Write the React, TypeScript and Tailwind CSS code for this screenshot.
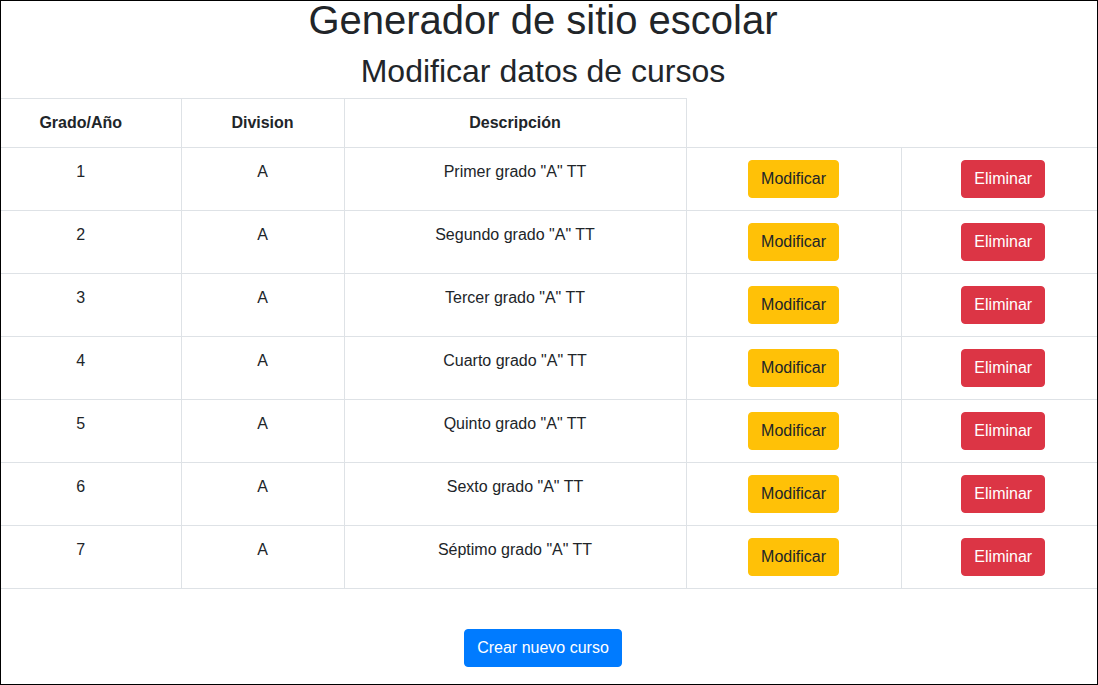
import React from 'react';

interface Curso {
    grado: string;
    division: string;
    descripcion: string;
}

const cursos: Curso[] = [
    { grado: '1', division: 'A', descripcion: 'Primer grado "A" TT' },
    { grado: '2', division: 'A', descripcion: 'Segundo grado "A" TT' },
    { grado: '3', division: 'A', descripcion: 'Tercer grado "A" TT' },
    { grado: '4', division: 'A', descripcion: 'Cuarto grado "A" TT' },
    { grado: '5', division: 'A', descripcion: 'Quinto grado "A" TT' },
    { grado: '6', division: 'A', descripcion: 'Sexto grado "A" TT' },
    { grado: '7', division: 'A', descripcion: 'Séptimo grado "A" TT' },
];

const cell = 'border border-[#dee2e6] p-3 align-top text-center leading-6';

export default function App() {
    return (
        <div
            className="w-[1098px] h-[685px] border border-black overflow-hidden bg-white text-[#212529]"
            style={{ fontFamily: '"Liberation Sans", Arial, sans-serif' }}
        >
            <div className="w-[1124px] ml-[-20px] flex flex-col items-center">
                {/* Headings */}
                <h1 className="text-[40px] leading-[38px] mb-[13px] font-normal">
                    Generador de sitio escolar
                </h1>
                <h2 className="text-[32px] leading-[38px] mb-2 font-normal">
                    Modificar datos de cursos
                </h2>

                {/* Courses table */}
                <table className="w-[1124px] table-fixed border-collapse text-base">
                    <colgroup>
                        <col className="w-[200px]" />
                        <col className="w-[163px]" />
                        <col className="w-[342px]" />
                        <col className="w-[215px]" />
                        <col className="w-[204px]" />
                    </colgroup>
                    <thead>
                        <tr>
                            <th className={`${cell} font-bold border-l-0`}>Grado/Año</th>
                            <th className={`${cell} font-bold`}>Division</th>
                            <th className={`${cell} font-bold`}>Descripción</th>
                        </tr>
                    </thead>
                    <tbody>
                        {cursos.map((c) => (
                            <tr key={c.grado}>
                                <td className={`${cell} border-l-0`}>{c.grado}</td>
                                <td className={cell}>{c.division}</td>
                                <td className={cell}>{c.descripcion}</td>
                                <td className={cell}>
                                    <button className="bg-[#ffc107] border border-[#ffc107] text-[#212529] rounded px-3 py-[6px] leading-6 text-base">
                                        Modificar
                                    </button>
                                </td>
                                <td className={`${cell} border-r-0`}>
                                    <button className="bg-[#dc3545] border border-[#dc3545] text-white rounded px-3 py-[6px] leading-6 text-base">
                                        Eliminar
                                    </button>
                                </td>
                            </tr>
                        ))}
                    </tbody>
                </table>

                <button className="mt-[40px] bg-[#007bff] border border-[#007bff] text-white rounded px-3 py-[6px] leading-6 text-base">
                    Crear nuevo curso
                </button>
            </div>
        </div>
    );
}
